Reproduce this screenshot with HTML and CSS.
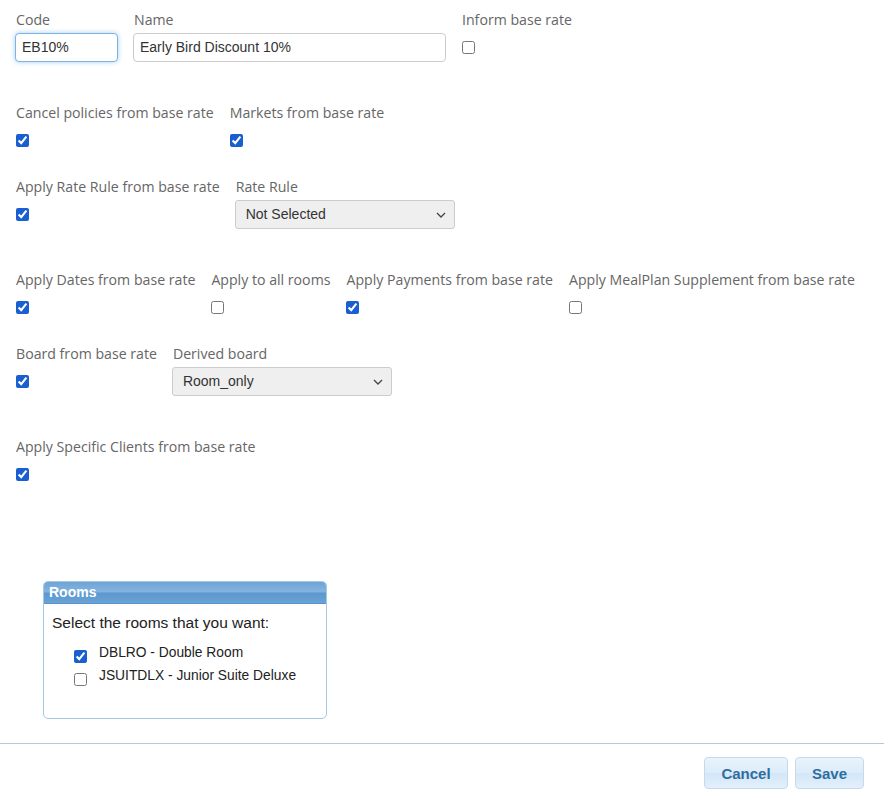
FILE: index.html
```html
<!DOCTYPE html>
<html>
<head>
<meta charset="utf-8">
<link rel="stylesheet" href="styles.css">
</head>
<body>
<div class="form">
  <div class="row wide">
    <div class="group">
      <label class="lbl">Code</label>
      <div class="ctrl"><input class="txt code focus" type="text" value="EB10%"></div>
    </div>
    <div class="group">
      <label class="lbl">Name</label>
      <div class="ctrl"><input class="txt name" type="text" value="Early Bird Discount 10%"></div>
    </div>
    <div class="group">
      <label class="lbl">Inform base rate</label>
      <div class="ctrl"><input class="chk" type="checkbox"></div>
    </div>
  </div>

  <div class="row">
    <div class="group">
      <label class="lbl">Cancel policies from base rate</label>
      <div class="ctrl"><input class="chk" type="checkbox" checked></div>
    </div>
    <div class="group">
      <label class="lbl">Markets from base rate</label>
      <div class="ctrl"><input class="chk" type="checkbox" checked></div>
    </div>
  </div>

  <div class="row wide">
    <div class="group">
      <label class="lbl">Apply Rate Rule from base rate</label>
      <div class="ctrl"><input class="chk" type="checkbox" checked></div>
    </div>
    <div class="group">
      <label class="lbl">Rate Rule</label>
      <div class="ctrl">
        <div class="selwrap">
          <select class="sel"><option>Not Selected</option></select>
          <svg class="chev" width="10" height="6" viewBox="0 0 10 6"><path d="M1 1l4 4 4-4" fill="none" stroke="#444" stroke-width="1.3"/></svg>
        </div>
      </div>
    </div>
  </div>

  <div class="row">
    <div class="group">
      <label class="lbl">Apply Dates from base rate</label>
      <div class="ctrl"><input class="chk" type="checkbox" checked></div>
    </div>
    <div class="group">
      <label class="lbl">Apply to all rooms</label>
      <div class="ctrl"><input class="chk" type="checkbox"></div>
    </div>
    <div class="group">
      <label class="lbl">Apply Payments from base rate</label>
      <div class="ctrl"><input class="chk" type="checkbox" checked></div>
    </div>
    <div class="group">
      <label class="lbl">Apply MealPlan Supplement from base rate</label>
      <div class="ctrl"><input class="chk" type="checkbox"></div>
    </div>
  </div>

  <div class="row wide">
    <div class="group">
      <label class="lbl">Board from base rate</label>
      <div class="ctrl"><input class="chk" type="checkbox" checked></div>
    </div>
    <div class="group">
      <label class="lbl">Derived board</label>
      <div class="ctrl">
        <div class="selwrap">
          <select class="sel"><option>Room_only</option></select>
          <svg class="chev" width="10" height="6" viewBox="0 0 10 6"><path d="M1 1l4 4 4-4" fill="none" stroke="#444" stroke-width="1.3"/></svg>
        </div>
      </div>
    </div>
  </div>

  <div class="row">
    <div class="group">
      <label class="lbl">Apply Specific Clients from base rate</label>
      <div class="ctrl"><input class="chk" type="checkbox" checked></div>
    </div>
  </div>

  <div class="panel">
    <div class="panel-head">Rooms</div>
    <div class="panel-body">
      <p class="intro">Select the rooms that you want:</p>
      <ul class="rooms">
        <li><input class="chk" type="checkbox" checked><span>DBLRO - Double Room</span></li>
        <li><input class="chk" type="checkbox"><span>JSUITDLX - Junior Suite Deluxe</span></li>
      </ul>
    </div>
  </div>
</div>

<div class="footer">
  <button class="btn cancel">Cancel</button>
  <button class="btn save">Save</button>
</div>
</body>
</html>
```

FILE: styles.css
```css
* { box-sizing: border-box; }
html, body { margin: 0; padding: 0; background: #fff; }
body { font-family: "Open Sans", "Noto Sans", sans-serif; }

.form { padding: 10px 15px 0 15px; height: 743px; }

.row { display: flex; align-items: flex-start; gap: 15px; margin-bottom: 22px; }
.row.wide { margin-bottom: 41px; }

.group { display: flex; flex-direction: column; }
.lbl { display: block; font-size: 14.15px; line-height: 20px; color: #666; padding-left: 1px; white-space: nowrap; }
.ctrl { height: 30px; margin-top: 2px; display: flex; align-items: center; }

.txt {
  height: 29px; border: 1px solid #ccc; border-radius: 4px; padding: 0 6px;
  font-family: "Liberation Sans", Arial, sans-serif; font-size: 14px; color: #333;
  background: #fff; outline: none;
}
.txt.code { width: 103px; }
.txt.name { width: 313px; }
.txt.focus { border-color: #7fb2e5; box-shadow: 0 0 5px rgba(102, 175, 233, 0.6); }

.chk { width: 13px; height: 13px; margin: 0 0 0 1px; accent-color: #1a5fd0; }

.selwrap { position: relative; width: 220px; height: 29px; }
.sel {
  appearance: none; -webkit-appearance: none; width: 100%; height: 100%;
  background: #efefef; border: 1px solid #ccc; border-radius: 3px;
  padding: 0 10px; font-family: "Liberation Sans", Arial, sans-serif; font-size: 14px; color: #333;
}
.chev { position: absolute; right: 9px; top: 12px; pointer-events: none; }

.panel {
  width: 284px; margin: 92px 0 0 28px; border: 1px solid #a6c9e2; border-radius: 5px;
  overflow: hidden; font-family: "Liberation Sans", Arial, sans-serif;
}
.panel-head {
  height: 22px; line-height: 21px; padding-left: 5px; color: #fff; font-weight: bold; font-size: 14px;
  background: linear-gradient(to bottom, #6fa4d6 0%, #83b3df 45%, #5c98cf 55%, #6aa2d5 100%);
  border-bottom: 1px solid #5b94cb;
}
.panel-body { padding: 10px 8px 0 8px; height: 114px; }
.intro { margin: 0; font-size: 15.5px; color: #222; line-height: 18px; }
.rooms { list-style: none; margin: 11px 0 0 0; padding: 0 0 0 22px; }
.rooms li { display: flex; align-items: center; height: 23px; font-size: 13.8px; color: #222; }
.rooms li .chk { width: 13px; height: 13px; margin: 4px 12px 0 0; }
.rooms li span { position: relative; top: -2px; }

.footer {
  border-top: 1px solid #b7c7d6; height: 63px; display: flex; justify-content: flex-end;
  align-items: flex-start; padding: 13px 20px 0 0; gap: 7px;
}
.btn {
  height: 32px; border: 1px solid #c5dbec; border-radius: 4px;
  background: linear-gradient(to bottom, #e9f3fc 0%, #dcecfa 50%, #d3e6f8 52%, #e3f0fb 100%);
  color: #2e6e9e; font-family: "Liberation Sans", Arial, sans-serif; font-weight: bold; font-size: 15px;
  padding: 0;
}
.btn.cancel { width: 84px; }
.btn.save { width: 69px; }
```
